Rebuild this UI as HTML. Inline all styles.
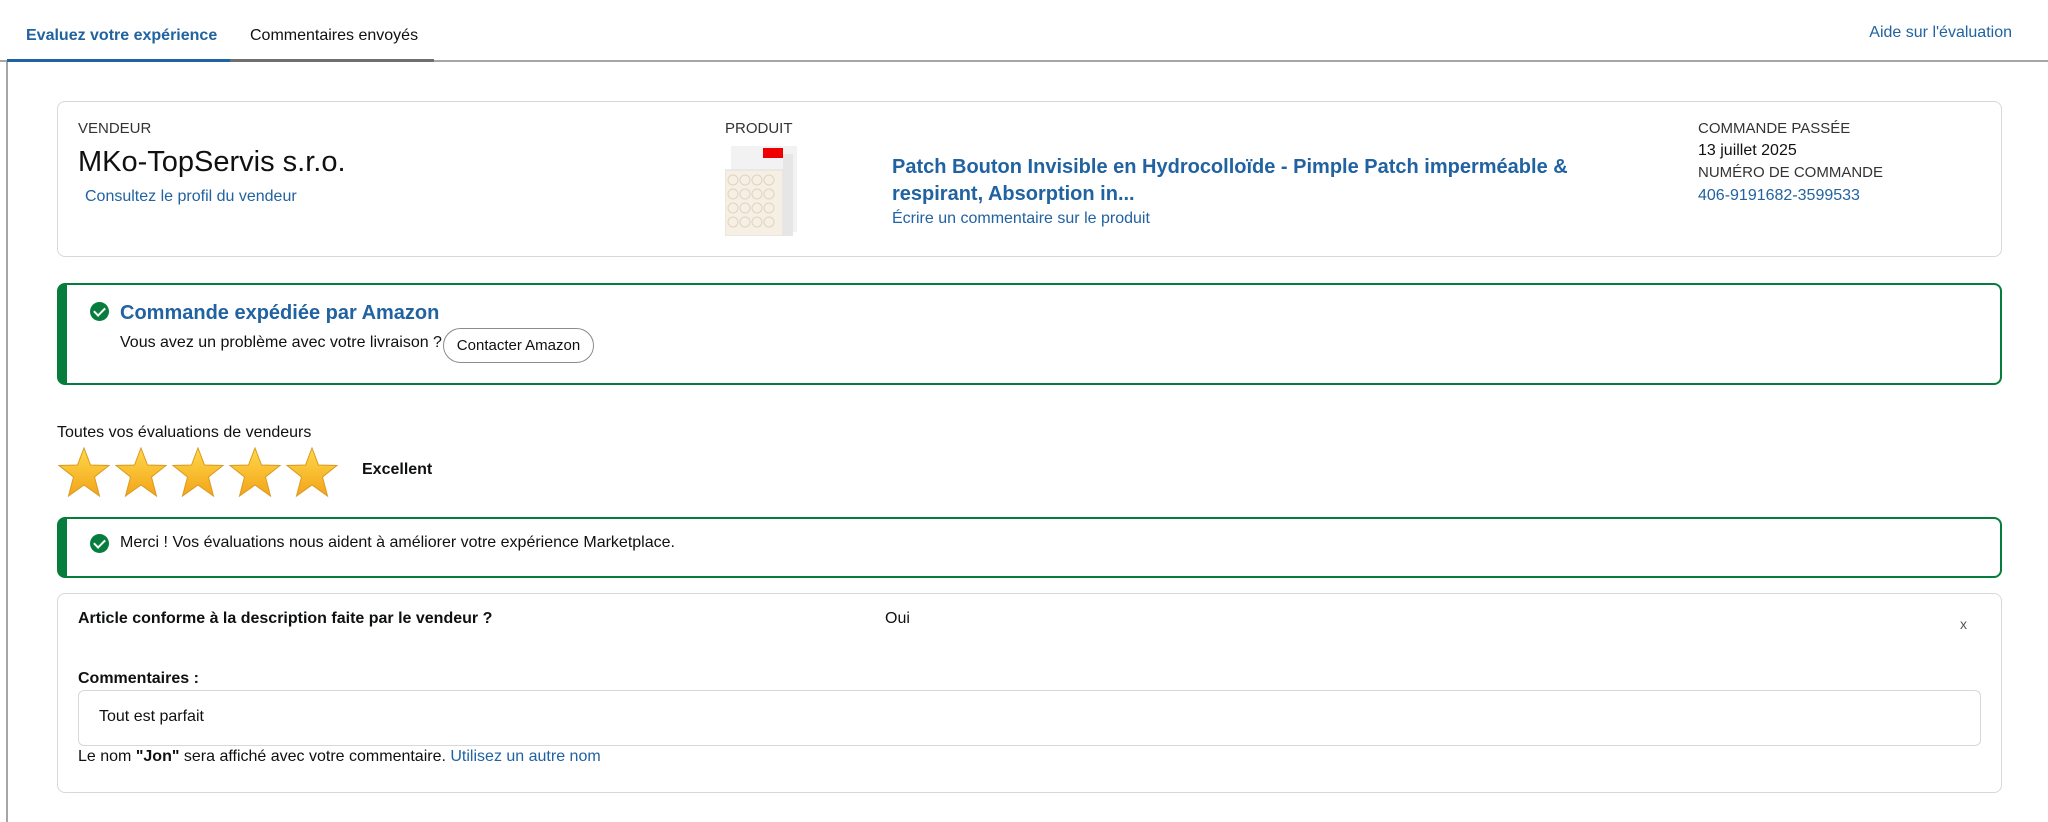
<!DOCTYPE html>
<html><head><meta charset="utf-8"><style>
*{box-sizing:border-box;margin:0;padding:0}
body{width:2048px;height:813px;background:#fff;font-family:"Liberation Sans",sans-serif;color:#0f1111;position:relative;overflow:hidden;font-size:16px}
.a{position:absolute;white-space:nowrap}
.blue{color:#2162a1}
.lbl{color:#333;font-size:15px}
.card{position:absolute;border:1px solid #d5d9d9;border-radius:8px}
.green{position:absolute;border:2px solid #067d3c;border-left:10px solid #067d3c;border-radius:8px}
.chk{position:absolute;width:19px;height:19px;border-radius:50%;background:#067d3c}
.chk:after{content:"";position:absolute;left:6px;top:3px;width:5px;height:9px;border:solid #fff;border-width:0 2.5px 2.5px 0;transform:rotate(45deg)}
</style></head><body>
<div class="a blue" style="left:26px;top:27px;font-size:16px;font-weight:bold">Evaluez votre expérience</div>
<div class="a" style="left:250px;top:27px;font-size:16px">Commentaires envoyés</div>
<div class="a blue" style="right:36px;top:24px;font-size:16px">Aide sur l'évaluation</div>
<div class="a" style="left:0;top:60px;width:2048px;height:2px;background:#a6a6a6"></div>
<div class="a" style="left:7px;top:59px;width:223px;height:3px;background:#2162a1"></div>
<div class="a" style="left:230px;top:59px;width:204px;height:3px;background:#6f6f6f"></div>
<div class="a" style="left:6px;top:62px;width:2px;height:760px;background:#a6a6a6"></div>

<div class="card" style="left:57px;top:101px;width:1945px;height:156px"></div>
<div class="a lbl" style="left:78px;top:120px">VENDEUR</div>
<div class="a" style="left:78px;top:146px;font-size:29px">MKo-TopServis s.r.o.</div>
<div class="a blue" style="left:85px;top:188px;font-size:16px">Consultez le profil du vendeur</div>
<div class="a lbl" style="left:725px;top:120px">PRODUIT</div>
<svg class="a" style="left:725px;top:146px" width="76" height="90" viewBox="0 0 76 90">
<rect x="6" y="0" width="66" height="86" fill="#f2f2f2"/><rect x="0" y="24" width="58" height="66" fill="#f6efe4" stroke="#ddd"/>
<rect x="58" y="8" width="10" height="82" fill="#e6e6e6"/>
<g fill="none" stroke="#e0d3c0" stroke-width="1"><circle cx="8" cy="34" r="5"/><circle cx="20" cy="34" r="5"/><circle cx="32" cy="34" r="5"/><circle cx="44" cy="34" r="5"/><circle cx="8" cy="48" r="5"/><circle cx="20" cy="48" r="5"/><circle cx="32" cy="48" r="5"/><circle cx="44" cy="48" r="5"/><circle cx="8" cy="62" r="5"/><circle cx="20" cy="62" r="5"/><circle cx="32" cy="62" r="5"/><circle cx="44" cy="62" r="5"/><circle cx="8" cy="76" r="5"/><circle cx="20" cy="76" r="5"/><circle cx="32" cy="76" r="5"/><circle cx="44" cy="76" r="5"/></g>
<rect x="38" y="2" width="20" height="10" fill="#e00"/></svg>
<div class="a blue" style="left:892px;top:154px;font-size:20px;font-weight:bold;line-height:27px">Patch Bouton Invisible en Hydrocolloïde - Pimple Patch imperméable &amp;<br>respirant, Absorption in...</div>
<div class="a blue" style="left:892px;top:210px;font-size:16px">Écrire un commentaire sur le produit</div>
<div class="a lbl" style="left:1698px;top:120px">COMMANDE PASSÉE</div>
<div class="a" style="left:1698px;top:142px;font-size:16px">13 juillet 2025</div>
<div class="a lbl" style="left:1698px;top:164px">NUMÉRO DE COMMANDE</div>
<div class="a blue" style="left:1698px;top:187px;font-size:16px">406-9191682-3599533</div>

<div class="green" style="left:57px;top:283px;width:1945px;height:102px"></div>
<div class="chk" style="left:90px;top:302px"></div>
<div class="a blue" style="left:120px;top:302px;font-size:20px;font-weight:bold">Commande expédiée par Amazon</div>
<div class="a" style="left:120px;top:334px;font-size:16px">Vous avez un problème avec votre livraison ?</div>
<div class="a" style="left:443px;top:328px;width:151px;height:35px;border:1px solid #888c8c;border-radius:18px;font-size:15px;text-align:center;line-height:33px">Contacter Amazon</div>

<div class="a" style="left:57px;top:424px;font-size:16px">Toutes vos évaluations de vendeurs</div>
<svg class="a" style="left:58px;top:447px" width="282" height="52" viewBox="0 0 282 52">
<defs><linearGradient id="g" x1="0" y1="0" x2="0" y2="1"><stop offset="0" stop-color="#ffd84a"/><stop offset="1" stop-color="#f3a41a"/></linearGradient>
<path id="s" d="M26 1 L32.5 18 L51 18.5 L36.5 30 L41.5 49 L26 38 L10.5 49 L15.5 30 L1 18.5 L19.5 18 Z" fill="url(#g)" stroke="#d99a1e" stroke-width="1"/></defs>
<use href="#s" x="0"/><use href="#s" x="57"/><use href="#s" x="114"/><use href="#s" x="171"/><use href="#s" x="228"/></svg>
<div class="a" style="left:362px;top:461px;font-size:16px;font-weight:bold">Excellent</div>

<div class="green" style="left:57px;top:517px;width:1945px;height:61px"></div>
<div class="chk" style="left:90px;top:534px"></div>
<div class="a" style="left:120px;top:534px;font-size:16px">Merci ! Vos évaluations nous aident à améliorer votre expérience Marketplace.</div>

<div class="card" style="left:57px;top:593px;width:1945px;height:200px"></div>
<div class="a" style="left:78px;top:610px;font-size:16px;font-weight:bold">Article conforme à la description faite par le vendeur ?</div>
<div class="a" style="left:885px;top:610px;font-size:16px">Oui</div>
<div class="a" style="left:1960px;top:616px;font-size:14px;color:#555">x</div>
<div class="a" style="left:78px;top:670px;font-size:16px;font-weight:bold">Commentaires :</div>
<div class="a" style="left:78px;top:690px;width:1903px;height:56px;border:1px solid #d5d9d9;border-radius:6px"></div>
<div class="a" style="left:99px;top:708px;font-size:16px">Tout est parfait</div>
<div class="a" style="left:78px;top:748px;font-size:16px">Le nom <b>"Jon"</b> sera affiché avec votre commentaire. <span class="blue">Utilisez un autre nom</span></div>
</body></html>
